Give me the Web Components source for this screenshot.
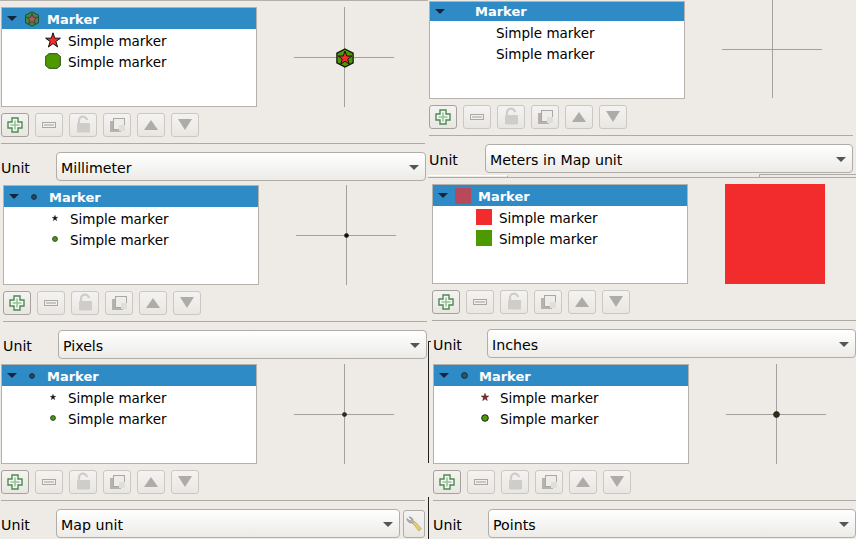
<!DOCTYPE html>
<html>
<head>
<meta charset="utf-8">
<title>Marker symbol panels</title>
<style>
    html, body {
        margin: 0;
        background: #eeebe7;
        font-family: "DejaVu Sans", sans-serif;
    }
</style>
</head>
<body>
<symbol-collage>
    <panel-column slot="left">
        <symbol-panel unit="Millimeter" style="--x:1px; --hr-r:3px; --unit-r:2px; --after:4px">
            <marker-icon slot="root" kind="stack" muted></marker-icon>
            <marker-icon slot="first" kind="star"></marker-icon>
            <marker-icon slot="second" kind="blob"></marker-icon>
            <marker-icon slot="preview" kind="stack" size="20"></marker-icon>
        </symbol-panel>
        <symbol-panel unit="Pixels" style="--x:3px; --hr-r:1px; --unit-r:1px; --after:5px">
            <marker-icon slot="root" kind="dot" color="#26455f" size="6"></marker-icon>
            <marker-icon slot="first" kind="star" color="#111" size="6"></marker-icon>
            <marker-icon slot="second" kind="dot" color="#4c9900" size="6"></marker-icon>
            <marker-icon slot="preview" kind="dot" color="#111" size="5"></marker-icon>
        </symbol-panel>
        <symbol-panel unit="Map unit" style="--x:1px; --hr-r:3px; --unit-r:3px">
            <marker-icon slot="root" kind="dot" color="#26455f" size="6"></marker-icon>
            <marker-icon slot="first" kind="star" color="#111" size="6"></marker-icon>
            <marker-icon slot="second" kind="dot" color="#4c9900" size="6"></marker-icon>
            <marker-icon slot="preview" kind="dot" color="#3a2a10" size="5"></marker-icon>
            <tool-button slot="unit-tool"></tool-button>
        </symbol-panel>
    </panel-column>
    <panel-column slot="right">
        <symbol-panel unit="Meters in Map unit" style="--x:1px; --tree-top:1px; --tree-h:98px; --pv-h:99px; --hr-r:3px; --unit-r:3px; --label-w:56px; --root-h:19px; --root-pad:0px">
        </symbol-panel>
        <panel-edge></panel-edge>
        <symbol-panel unit="Inches" style="--x:4px; --unit-shift:1px; --after:6px; --before:6px; --cross:transparent">
            <marker-icon slot="root" kind="square" color="#b7495a"></marker-icon>
            <marker-icon slot="first" kind="square" color="#f22c2c"></marker-icon>
            <marker-icon slot="second" kind="square" color="#4c9900"></marker-icon>
            <marker-icon slot="preview" kind="square" color="#f22c2c" size="100" style="margin:0 1px 1px 0"></marker-icon>
        </symbol-panel>
        <symbol-panel unit="Points" style="--x:5px">
            <marker-icon slot="root" kind="dot" color="#2d5560" size="7"></marker-icon>
            <marker-icon slot="first" kind="star" color="#a0202a" size="8"></marker-icon>
            <marker-icon slot="second" kind="dot" color="#4c9900" size="8"></marker-icon>
            <marker-icon slot="preview" kind="dot" color="#3a2a10" size="7"></marker-icon>
        </symbol-panel>
    </panel-column>
</symbol-collage>

<script>
const collageTemplate = document.createElement('template');
collageTemplate.innerHTML = `
    <style>
        :host {
            display: flex;
            position: relative;
            width: 856px;
            height: 539px;
            overflow: hidden;
        }
        .column {
            width: 428px;
        }
        .seam {
            position: absolute;
            left: 428px;
            width: 1px;
            background: #222;
        }
        .seam-a {
            top: 341px;
            height: 122px;
        }
        .seam-a:after {
            content: '';
            position: absolute;
            top: 0;
            left: 0;
            width: 3px;
            height: 1px;
            background: #222;
        }
        .seam-b {
            top: 497px;
            height: 42px;
        }
    </style>
    <div class="column"><slot name="left"></slot></div>
    <div class="column"><slot name="right"></slot></div>
    <div class="seam seam-a"></div>
    <div class="seam seam-b"></div>
`;

class SymbolCollage extends HTMLElement {
    connectedCallback() {
        const shadowRoot = this.attachShadow({mode: 'open'});
        shadowRoot.appendChild(collageTemplate.content.cloneNode(true));
    }
}
customElements.define('symbol-collage', SymbolCollage);

const columnTemplate = document.createElement('template');
columnTemplate.innerHTML = `
    <style>
        :host {
            display: flex;
            flex-direction: column;
        }
        :host([slot="left"]) {
            border-top: 1px solid #b3b0ab;
            padding-top: 6px;
        }
    </style>
    <slot></slot>
`;

class PanelColumn extends HTMLElement {
    connectedCallback() {
        const shadowRoot = this.attachShadow({mode: 'open'});
        shadowRoot.appendChild(columnTemplate.content.cloneNode(true));
    }
}
customElements.define('panel-column', PanelColumn);

const panelTemplate = document.createElement('template');
panelTemplate.innerHTML = `
    <style>
        :host {
            display: block;
            padding-left: var(--x, 0);
            margin-top: var(--before, 0);
            margin-bottom: var(--after, 0);
            font-size: 13.5px;
            color: #000;
        }
        .body {
            display: flex;
            gap: 37px;
            height: calc(var(--tree-h, 100px) + var(--tree-top, 0px));
        }
        .tree {
            box-sizing: border-box;
            width: 256px;
            height: var(--tree-h, 100px);
            margin-top: var(--tree-top, 0);
            background: #fff;
            border: 1px solid #b5b2ae;
            overflow: hidden;
        }
        .row {
            display: flex;
            align-items: center;
            height: 21px;
            white-space: nowrap;
        }
        .text {
            padding-top: 2px;
        }
        .root {
            height: var(--root-h, 21px);
            background: #2e8bc6;
            color: #fff;
            font-weight: 700;
            padding-left: 5px;
        }
        .root .text {
            padding-top: var(--root-pad, 2px);
            font-size: 13px;
        }
        .arrow {
            width: 0;
            height: 0;
            border-top: 5px solid #14253a;
            border-left: 5px solid transparent;
            border-right: 5px solid transparent;
            margin-right: 7px;
        }
        .cell {
            display: grid;
            place-items: center;
            width: 16px;
            height: 16px;
            flex: none;
            margin-right: 7px;
        }
        .child {
            padding-left: 43px;
        }
        .preview {
            display: grid;
            place-items: center;
            width: 101px;
            height: var(--pv-h, 101px);
            background:
                linear-gradient(var(--cross, #a3a19d), var(--cross, #a3a19d)) 0 calc((var(--pv-h, 101px) - 1px) / 2) / 100px 1px no-repeat,
                linear-gradient(var(--cross, #a3a19d), var(--cross, #a3a19d)) 50px 0 / 1px calc(var(--pv-h, 101px) - 1px) no-repeat;
        }
        .tools {
            display: flex;
            gap: 6px;
            margin-top: 6px;
        }
        .rule {
            height: 1px;
            margin: 6px var(--hr-r, 0) 0 0;
            background: #aeaba6;
        }
        .unit {
            display: flex;
            align-items: center;
            gap: 3px;
            height: 29px;
            margin: 8px var(--unit-r, 0) 0 0;
            font-size: 14.2px;
        }
        .label {
            box-sizing: border-box;
            flex: none;
            width: calc(var(--label-w, 55px) - 3px);
            padding: 2px 0 0 var(--unit-shift, 0);
        }
    </style>
    <div class="body">
        <div class="tree">
            <div class="row root">
                <span class="arrow"></span>
                <span class="cell"><slot name="root"></slot></span>
                <span class="text">Marker</span>
            </div>
            <div class="row child">
                <span class="cell"><slot name="first"></slot></span>
                <span class="text">Simple marker</span>
            </div>
            <div class="row child">
                <span class="cell"><slot name="second"></slot></span>
                <span class="text">Simple marker</span>
            </div>
        </div>
        <div class="preview"><slot name="preview"></slot></div>
    </div>
    <div class="tools">
        <tool-button icon="plus"></tool-button>
        <tool-button icon="minus"></tool-button>
        <tool-button icon="lock"></tool-button>
        <tool-button icon="copy"></tool-button>
        <tool-button icon="up"></tool-button>
        <tool-button icon="down"></tool-button>
    </div>
    <div class="rule"></div>
    <div class="unit">
        <span class="label">Unit</span>
        <unit-combo></unit-combo>
        <slot name="unit-tool"></slot>
    </div>
`;

class SymbolPanel extends HTMLElement {
    connectedCallback() {
        const shadowRoot = this.attachShadow({mode: 'open'});
        shadowRoot.appendChild(panelTemplate.content.cloneNode(true));
        shadowRoot.querySelector('unit-combo').textContent = this.getAttribute('unit');
    }
}

const comboTemplate = document.createElement('template');
comboTemplate.innerHTML = `
    <style>
        :host {
            box-sizing: border-box;
            display: flex;
            align-items: center;
            justify-content: space-between;
            flex: 1;
            height: 29px;
            padding: 2px 6px 0 4px;
            border: 1px solid #b1aea9;
            border-radius: 4px;
            background: linear-gradient(#ffffff, #ecebe7);
        }
        .drop {
            width: 0;
            height: 0;
            border-top: 5px solid #555;
            border-left: 5px solid transparent;
            border-right: 5px solid transparent;
        }
    </style>
    <slot></slot>
    <span class="drop"></span>
`;

class UnitCombo extends HTMLElement {
    connectedCallback() {
        const shadowRoot = this.attachShadow({mode: 'open'});
        shadowRoot.appendChild(comboTemplate.content.cloneNode(true));
    }
}
customElements.define('unit-combo', UnitCombo);

const buttonIcons = {
    plus: '<path d="M11 5h6v4h4v6h-4v4h-6v-4H7V9h4z" fill="#f3f7f1" stroke="#4d8a52" stroke-width="1.4"/><path d="M14 7.500v9M9.500 12h9" stroke="#9cc29f" stroke-width="1.6"/>',
    minus: '<rect x="7.500" y="9.500" width="13" height="5" fill="#f2f1ef" stroke="#aaa8a4"/><rect x="9" y="11" width="10" height="2" fill="#c9c7c3"/>',
    lock: '<path d="M10 10V8a4 4 0 0 1 8-.8" fill="none" stroke="#cfcdc9" stroke-width="2.2"/><rect x="8" y="10" width="13" height="9.500" rx="1" fill="#cfcdc9"/>',
    copy: '<path d="M7 8h4v8h7v3H7z" fill="#b5b3af"/><rect x="10.500" y="5.500" width="11" height="11" fill="#efedea" stroke="#aaa8a4"/><rect x="16" y="12" width="6" height="6" fill="#e0ded9"/>',
    up: '<path d="M14 7l7 10H7z" fill="#aeaca8"/>',
    down: '<path d="M7 6h14l-7 11z" fill="#aeaca8"/>',
    wrench: '<g transform="translate(.5,1.5) scale(.85)"><path d="M4 6a5 5 0 0 0 6 5l1 1 1.500-2-1-1a5 5 0 0 0-5-5l3 3-1.500 2z" fill="#b9b8b5" stroke="#7d7c7a" stroke-width=".7"/><path d="M11 11.500l2.500-2 7.500 8.500-3 2.500z" fill="#e3cf6f" stroke="#a89a55" stroke-width=".7"/></g>'
};

const buttonTemplate = document.createElement('template');
buttonTemplate.innerHTML = `
    <style>
        :host {
            box-sizing: border-box;
            display: block;
            flex: none;
            width: 28px;
            height: 24px;
            border: 1px solid #cbc8c3;
            border-radius: 3px;
            background: linear-gradient(#f5f3f1, #e9e6e2);
        }
        :host([icon="plus"]) {
            border-color: #a5a29d;
        }
        :host(:not([icon])) {
            width: 22px;
            height: 28px;
            border-color: #b1aea9;
        }
        svg {
            display: block;
            margin: -1px;
        }
    </style>
`;

class ToolButton extends HTMLElement {
    connectedCallback() {
        const shadowRoot = this.attachShadow({mode: 'open'});
        shadowRoot.appendChild(buttonTemplate.content.cloneNode(true));
        const icon = this.getAttribute('icon');
        const holder = document.createElement('div');
        holder.innerHTML = icon
            ? `<svg width="28" height="24" viewBox="0 0 28 24">${buttonIcons[icon]}</svg>`
            : `<svg width="22" height="28" viewBox="0 -2 22 28">${buttonIcons.wrench}</svg>`;
        shadowRoot.appendChild(holder.firstChild);
    }
}
customElements.define('tool-button', ToolButton);

customElements.define('symbol-panel', SymbolPanel);

const edgeTemplate = document.createElement('template');
edgeTemplate.innerHTML = `
    <style>
        :host {
            box-sizing: border-box;
            display: flex;
            justify-content: space-between;
            height: 5px;
            border-bottom: 1px solid #aeaba6;
        }
        .near {
            box-sizing: border-box;
            width: 80px;
            margin-top: 2px;
            border-top: 1px solid #fff;
            border-right: 1px solid #aeaba6;
        }
        .far {
            box-sizing: border-box;
            width: 97px;
            margin-top: 1px;
            border-top: 1px solid #aeaba6;
            border-left: 1px solid #aeaba6;
        }
    </style>
    <div class="near"></div>
    <div class="far"></div>
`;

class PanelEdge extends HTMLElement {
    connectedCallback() {
        const shadowRoot = this.attachShadow({mode: 'open'});
        shadowRoot.appendChild(edgeTemplate.content.cloneNode(true));
    }
}
customElements.define('panel-edge', PanelEdge);

class MarkerIcon extends HTMLElement {
    connectedCallback() {
        const shadowRoot = this.attachShadow({mode: 'open'});
        const kind = this.getAttribute('kind');
        const size = this.getAttribute('size') || 16;
        const color = this.getAttribute('color');
        const star = '8,.8 9.760,6.170 15.400,6.200 10.850,9.530 12.600,15 8,11.600 3.400,15 5.150,9.530 .6,6.200 6.240,6.170';
        const hex = '8,.8 14.500,4.200 14.500,11.800 8,15.200 1.500,11.800 1.500,4.200';
        const blob = '4,.6 12,.6 15.400,3.400 15.400,12.600 12,15.400 4,15.400 .6,12.600 .6,3.400';
        let art = '';
        if (kind === 'star') {
            art = `<polygon points="${star}" fill="${color || '#f22c2c'}" stroke="#111" stroke-width="1"/>`;
        } else if (kind === 'blob') {
            art = `<polygon points="${blob}" fill="#4c9900" stroke="#1d3a00" stroke-width=".8"/>`;
        } else if (kind === 'stack') {
            const muted = this.hasAttribute('muted');
            art = `<polygon points="${hex}" fill="${muted ? '#3d8c3f' : '#4c9900'}" stroke="${muted ? '#1d4a38' : '#111'}" stroke-width="1"/>
                <polygon points="8,2.600 9.400,6.400 13.400,6.400 10.200,8.900 11.400,12.900 8,10.500 4.600,12.900 5.800,8.900 2.600,6.400 6.600,6.400" fill="${muted ? '#bd5068' : '#f22c2c'}" stroke="${muted ? '#2f3a30' : '#111'}" stroke-width=".8"/>`;
        } else if (kind === 'dot') {
            art = `<circle cx="8" cy="8" r="6.600" fill="${color}" stroke="#16242c" stroke-width="2"/>`;
        } else {
            art = `<rect width="16" height="16" fill="${color}"/>`;
        }
        shadowRoot.innerHTML = `
            <style>
                :host {
                    display: block;
                    width: ${size}px;
                    height: ${size}px;
                }
                svg {
                    display: block;
                }
            </style>
            <svg width="${size}" height="${size}" viewBox="0 0 16 16">${art}</svg>
        `;
    }
}
customElements.define('marker-icon', MarkerIcon);
</script>
</body>
</html>
